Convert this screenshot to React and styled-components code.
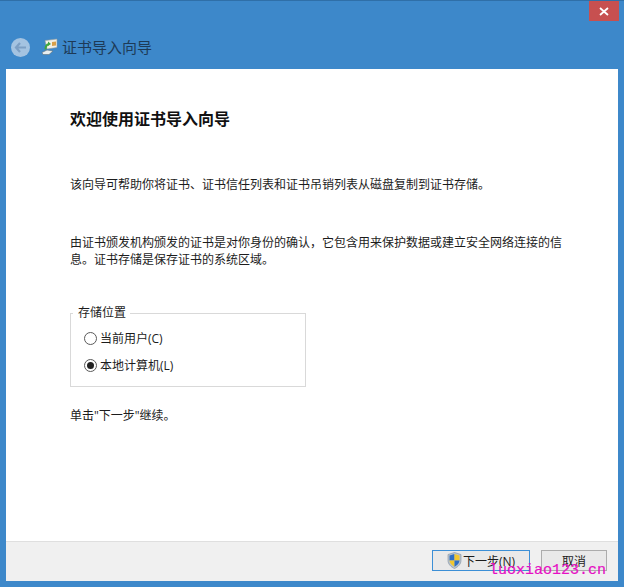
import React from 'react';
import styled, { createGlobalStyle } from 'styled-components';

const GlobalStyle = createGlobalStyle`
  html, body {
    margin: 0;
    padding: 0;
    background: #3c87c9;
  }
  body {
    font-family: "Open Sans", "Noto Sans CJK SC", sans-serif;
  }
`;

const Window = styled.div`
  position: relative;
  width: 624px;
  height: 587px;
  box-sizing: border-box;
  display: flex;
  flex-direction: column;
  background: #3d88ca;
  border-top: 1px solid #2f6fa8;
  overflow: hidden;
`;

const TitleBar = styled.div`
  display: flex;
  justify-content: flex-end;
  height: 25px;
  padding-right: 5px;
`;

const CloseButton = styled.div`
  width: 30px;
  height: 20px;
  background: #c75050;
  display: flex;
  align-items: center;
  justify-content: center;
`;

const NavBar = styled.div`
  display: flex;
  align-items: center;
  box-sizing: border-box;
  height: 43px;
  padding: 0 0 2px 11px;
  color: #1d3a57;
  font-size: 15px;
`;

const BackButton = styled.div`
  width: 19px;
  height: 19px;
  border-radius: 50%;
  background: #a4c3e1;
  display: flex;
  align-items: center;
  justify-content: center;
  margin: 2px 11px 0 0;
`;

const WizardIcon = styled.svg`
  width: 17px;
  height: 17px;
  margin: -1px 4px 0 0;
`;

const Panel = styled.div`
  flex: 1;
  display: flex;
  flex-direction: column;
  margin: 0 6px 6px;
  background: #fff;
`;

const Content = styled.div`
  flex: 1;
  padding: 39px 40px 0 64px;
  color: #1c1c1c;
  font-size: 12px;
  line-height: 17px;
`;

const Heading = styled.h1`
  margin: 0;
  font-size: 16px;
  line-height: 22px;
  font-weight: 700;
  color: #111;
`;

const Paragraph = styled.p`
  margin: ${p => p.$top}px 0 0;
`;

const GroupBox = styled.fieldset`
  box-sizing: border-box;
  width: 236px;
  height: 81px;
  margin: 38px 0 0;
  padding: 0 0 0 14px;
  border: 1px solid #d9d9d9;
  display: block;
`;

const Legend = styled.legend`
  padding: 0 4px 0 5px;
  margin-left: -12px;
  line-height: 14px;
`;

const RadioRow = styled.label`
  display: flex;
  align-items: center;
  height: 17px;
  margin-top: ${p => p.$top}px;
`;

const RadioCircle = styled.span`
  box-sizing: border-box;
  width: 13px;
  height: 13px;
  margin-left: -1px;
  border-radius: 50%;
  border: 1px solid #5a5a5a;
  margin-right: 3px;
  display: flex;
  align-items: center;
  justify-content: center;
`;

const RadioDot = styled.span`
  width: 7px;
  height: 7px;
  border-radius: 50%;
  background: #222;
`;

const Footer = styled.div`
  height: 40px;
  box-sizing: border-box;
  display: flex;
  justify-content: flex-end;
  align-items: center;
  gap: 11px;
  padding: 0 11px 2px 0;
  background: #f0f0f0;
  border-top: 1px solid #dfdfdf;
`;

const Button = styled.div`
  box-sizing: border-box;
  width: ${p => p.$width}px;
  height: 21px;
  display: flex;
  align-items: center;
  justify-content: center;
  font-size: 12px;
  color: #1c1c1c;
  background: #e9e9e9;
  border: 1px solid ${p => (p.$primary ? '#3c8fd6' : '#acacac')};
`;

const ShieldIcon = styled.svg`
  width: 15px;
  height: 17px;
  margin-right: 1px;
`;

const Watermark = styled.div`
  position: absolute;
  right: 18px;
  bottom: 8px;
  color: #e60fc4;
  font-family: "Liberation Mono", monospace;
  font-size: 15px;
  line-height: 16px;
  -webkit-text-stroke: 0.2px #e60fc4;
`;

export default function App() {
  return (
    <>
      <GlobalStyle />
      <Window>
        <TitleBar>
          <CloseButton>
            <svg width="10" height="9" viewBox="0 0 10 9">
              <path d="M1 1l8 7M9 1L1 8" stroke="#fff" strokeWidth="1.8" fill="none" />
            </svg>
          </CloseButton>
        </TitleBar>
        <NavBar>
          <BackButton>
            <svg width="13" height="11" viewBox="0 0 13 11">
              <path d="M6 1L2 5.500 6 10M2 5.500h10" stroke="#7d9fc4" strokeWidth="2.2" fill="none" />
            </svg>
          </BackButton>
          <WizardIcon viewBox="0 0 17 17">
            <path d="M4 2.500l12-1.500v8.500L6 11z" fill="#f4f1e6" stroke="#8d9aa0" strokeWidth="0.6" />
            <path d="M11 4l4-.5v4l-4 .5z" fill="#d9a04a" />
            <path d="M1 14.500l5-2.500 6 1-4 3.500H2z" fill="#e8eef0" stroke="#5f7078" strokeWidth="0.6" />
            <path d="M4.500 11.500c0-3 1-5 3.500-5.500" stroke="#3fa53c" strokeWidth="2" fill="none" />
            <path d="M7 3.500l3 2.500-3 2z" fill="#3fa53c" />
          </WizardIcon>
          证书导入向导
        </NavBar>
        <Panel>
          <Content>
            <Heading>欢迎使用证书导入向导</Heading>
            <Paragraph $top={46}>该向导可帮助你将证书、证书信任列表和证书吊销列表从磁盘复制到证书存储。</Paragraph>
            <Paragraph $top={41}>由证书颁发机构颁发的证书是对你身份的确认，它包含用来保护数据或建立安全网络连接的信息。证书存储是保存证书的系统区域。</Paragraph>
            <GroupBox>
              <Legend>存储位置</Legend>
              <RadioRow $top={10}>
                <RadioCircle />
                当前用户(C)
              </RadioRow>
              <RadioRow $top={10}>
                <RadioCircle>
                  <RadioDot />
                </RadioCircle>
                本地计算机(L)
              </RadioRow>
            </GroupBox>
            <Paragraph $top={20}>单击"下一步"继续。</Paragraph>
          </Content>
          <Footer>
            <Button $primary $width={98}>
              <ShieldIcon viewBox="0 0 15 17">
                <path d="M7.500.500l6.500 2v6c0 3.500-3 6.500-6.500 8-3.500-1.500-6.500-4.500-6.500-8v-6z" fill="#b9c4cf" stroke="#7f8f9f" strokeWidth="0.6" />
                <path d="M7.500 2v6.500H2.500V3.500z" fill="#2f6fc4" />
                <path d="M7.500 2l5 1.500v5h-5z" fill="#f2c72e" />
                <path d="M2.500 8.500h5v6.200c-2.600-1.200-4.800-3.400-5-6.200z" fill="#f2c72e" />
                <path d="M7.500 8.500h5c-.2 2.800-2.400 5-5 6.200z" fill="#2f6fc4" />
              </ShieldIcon>
              下一步(N)
            </Button>
            <Button $width={66}>取消</Button>
          </Footer>
        </Panel>
        <Watermark>luoxiao123.cn</Watermark>
      </Window>
    </>
  );
}
